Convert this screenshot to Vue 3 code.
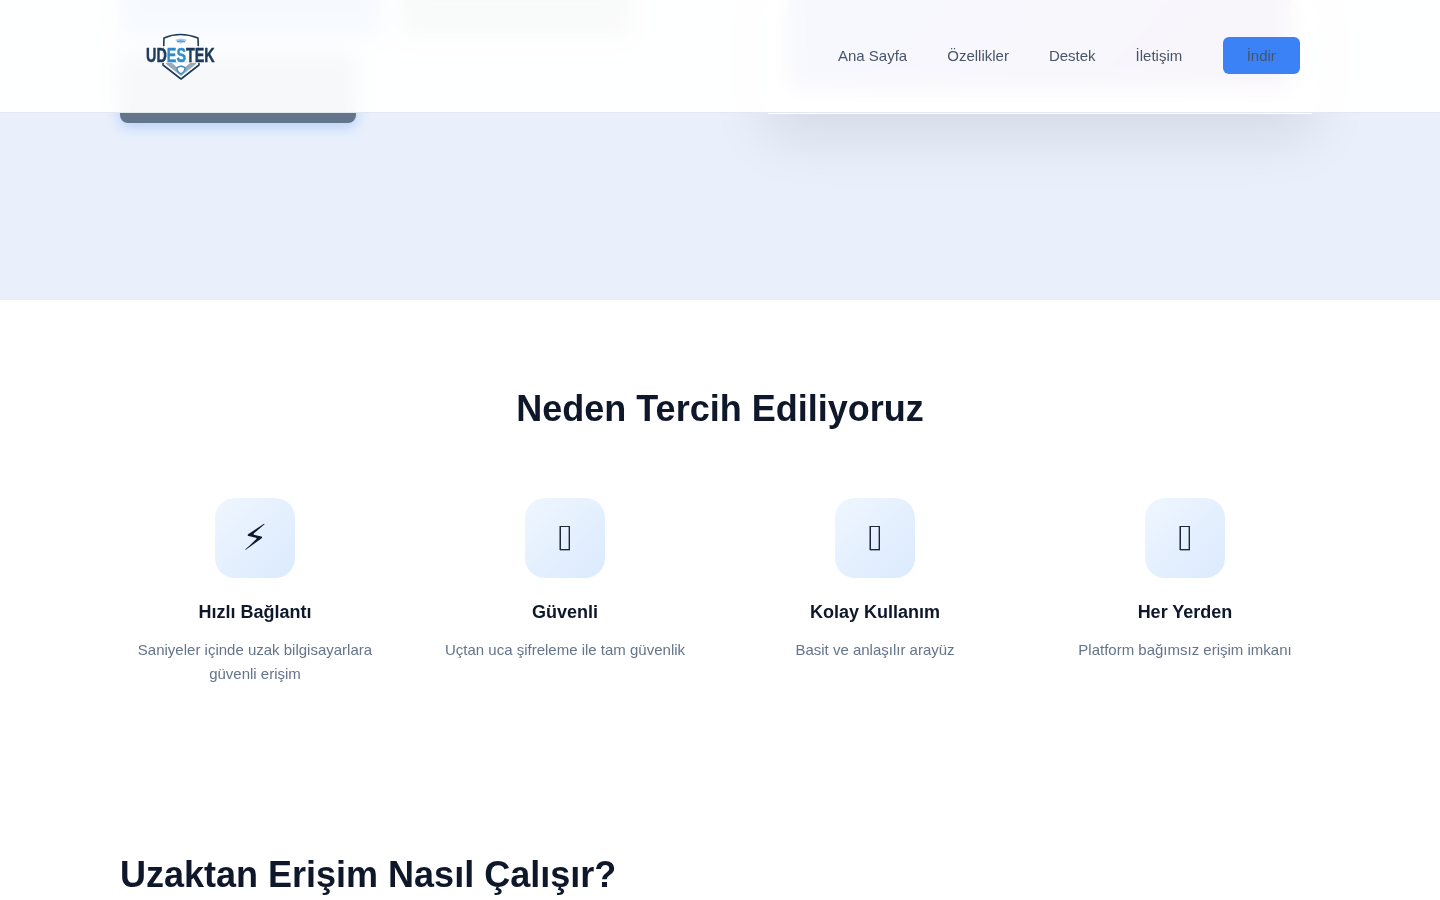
<script setup>
const links = ['Ana Sayfa', 'Özellikler', 'Destek', 'İletişim']

// missing: the reference's emoji has no font, so it shows an empty box
const features = [
  { icon: '\u26A1\uFE0E', title: 'Hızlı Bağlantı', text: 'Saniyeler içinde uzak bilgisayarlara güvenli erişim' },
  { missing: true, title: 'Güvenli', text: 'Uçtan uca şifreleme ile tam güvenlik' },
  { missing: true, title: 'Kolay Kullanım', text: 'Basit ve anlaşılır arayüz' },
  { missing: true, title: 'Her Yerden', text: 'Platform bağımsız erişim imkanı' }
]
</script>

<template>
  <div class="page">
    <header class="navbar">
      <a class="logo" href="#">
        <svg width="70" height="47" viewBox="0 0 70 47">
          <path d="M18 5 Q34 -2 52 5 L53 32 L35 46 L17 32 Z" fill="#fff" stroke="#1b3a5c" stroke-width="1.6" stroke-linejoin="round" />
          <path d="M20 28 H50 V31 L35 43 L20 31 Z" fill="#98a9bb" />
          <path d="M26 30 H44 L35 38 Z" fill="#fff" />
          <path d="M29 7 Q35 4 41 7 L35 11 Z" fill="#a9cbe6" />
          <path d="M31 9 Q35 7 39 9" fill="none" stroke="#3d8fc9" stroke-width="1.1" />
          <path d="M35 33 L39 34.5 Q39 39 35 41 Q31 39 31 34.5 Z" fill="#fff" stroke="#3d8fc9" stroke-width="1.4" />
          <rect x="14" y="13" width="42" height="17" fill="#fff" opacity="0.8" />
        </svg>
        <span class="logo-text">UD<span class="logo-accent">ES</span>TEK</span>
      </a>
      <nav class="nav-links">
        <a v-for="link in links" :key="link" href="#">{{ link }}</a>
        <a class="download" href="#">İndir</a>
      </nav>
    </header>

    <section class="hero">
      <div class="hero-actions">
        <div class="btn btn-primary"></div>
        <div class="btn btn-light"></div>
        <div class="btn btn-slate"></div>
      </div>
      <div class="hero-card">
        <div class="hero-shot"></div>
      </div>
    </section>

    <section class="features">
      <h2>Neden Tercih Ediliyoruz</h2>
      <div class="feature-grid">
        <div v-for="item in features" :key="item.title" class="feature">
          <div class="feature-icon">
            <span v-if="item.missing" class="tofu"></span>
            <template v-else>{{ item.icon }}</template>
          </div>
          <h3>{{ item.title }}</h3>
          <p>{{ item.text }}</p>
        </div>
      </div>
    </section>

    <section class="how">
      <h2>Uzaktan Erişim Nasıl Çalışır?</h2>
    </section>
  </div>
</template>

<style scoped>
.page {
  position: relative;
  height: 900px;
  overflow: hidden;
  background: #fff;
  font-family: "Liberation Sans", Arial, sans-serif;
}

.navbar {
  position: absolute;
  top: 0;
  left: 0;
  right: 0;
  z-index: 10;
  padding: 0 140px 2px 146px;
  height: 110px;
  display: flex;
  align-items: center;
  justify-content: space-between;
  background: rgba(255, 255, 255, 0.95);
  backdrop-filter: blur(10px);
  border-bottom: 1px solid #e2e8f0;
}
.logo {
  position: relative;
  display: block;
  width: 70px;
  height: 47px;
  margin-top: 3px;
  text-decoration: none;
}
.logo svg {
  display: block;
}
.logo-text {
  position: absolute;
  left: 0;
  top: 9px;
  font-size: 21px;
  line-height: 26px;
  font-weight: 700;
  white-space: nowrap;
  color: #1b3a5c;
  -webkit-text-stroke: 0.5px currentColor;
  transform: scaleX(0.685);
  transform-origin: left center;
}
.logo-accent {
  color: #2f8ccb;
}
.nav-links {
  display: flex;
  align-items: center;
  gap: 40px;
  will-change: transform;
}
.nav-links a {
  font-size: 15px;
  color: #475569;
  text-decoration: none;
}
.nav-links .download {
  margin-left: 0.4px;
  padding: 10px 24px;
  background: #3b82f6;
  border-radius: 6px;
}

.hero {
  height: 300px;
  box-sizing: border-box;
  padding: 0 128px 177px 120px;
  display: flex;
  align-items: flex-end;
  justify-content: space-between;
  overflow: hidden;
  background: #e9f0fc;
}
.hero-actions {
  width: 540px;
  display: flex;
  flex-wrap: wrap;
  gap: 20px 24px;
}
.btn {
  border-radius: 8px;
  height: 68px;
}
.btn-primary {
  width: 260px;
  background: #5b95f7;
  box-shadow: 0 4px 14px rgba(59, 130, 246, 0.3);
}
.btn-light {
  width: 224px;
  background: #8d93a0;
  box-shadow: 0 4px 14px rgba(15, 23, 42, 0.1);
}
.btn-slate {
  width: 236px;
  background: #64748b;
  box-shadow: 0 4px 14px rgba(59, 130, 246, 0.3);
}
.hero-card {
  width: 544px;
  margin-bottom: 9px;
  box-sizing: border-box;
  padding: 0 21px 24px;
  background: #fff;
  box-shadow: 0 20px 60px rgba(0, 0, 0, 0.1);
}
.hero-shot {
  height: 130px;
  background: linear-gradient(135deg, #667eea, #764ba2);
}

.features {
  padding: 81px 120px 0;
  will-change: transform;
}
.features h2,
.how h2 {
  margin: 0;
  font-size: 36px;
  line-height: 56px;
  font-weight: 700;
  color: #0f172a;
}
.features h2 {
  text-align: center;
}
.feature-grid {
  margin-top: 61px;
  display: grid;
  grid-template-columns: repeat(4, 270px);
  gap: 40px;
}
.feature {
  text-align: center;
}
.feature-icon {
  width: 80px;
  height: 80px;
  box-sizing: border-box;
  padding-bottom: 2px;
  margin: 0 auto;
  display: flex;
  align-items: center;
  justify-content: center;
  border-radius: 20px;
  font-family: "DejaVu Sans", sans-serif;
  font-size: 36px;
  color: #0f172a;
  background: linear-gradient(135deg, #eff6ff, #dbeafe);
}
.tofu {
  width: 8px;
  height: 22px;
  margin-top: 2px;
  border: 1px solid #1f2937;
  box-shadow: -1px 0 0 #7f8894, inset -1px 0 0 #9aa3ae, 0 1px 0 #9aa3ae;
}
.feature h3 {
  margin: 22px 0 0;
  font-size: 18px;
  line-height: 24px;
  font-weight: 700;
  color: #0f172a;
}
.feature p {
  margin: 14px 0 0;
  font-size: 15px;
  line-height: 24px;
  color: #64748b;
}

.how {
  padding: 0 120px;
  margin-top: 161px;
  will-change: transform;
}
</style>
